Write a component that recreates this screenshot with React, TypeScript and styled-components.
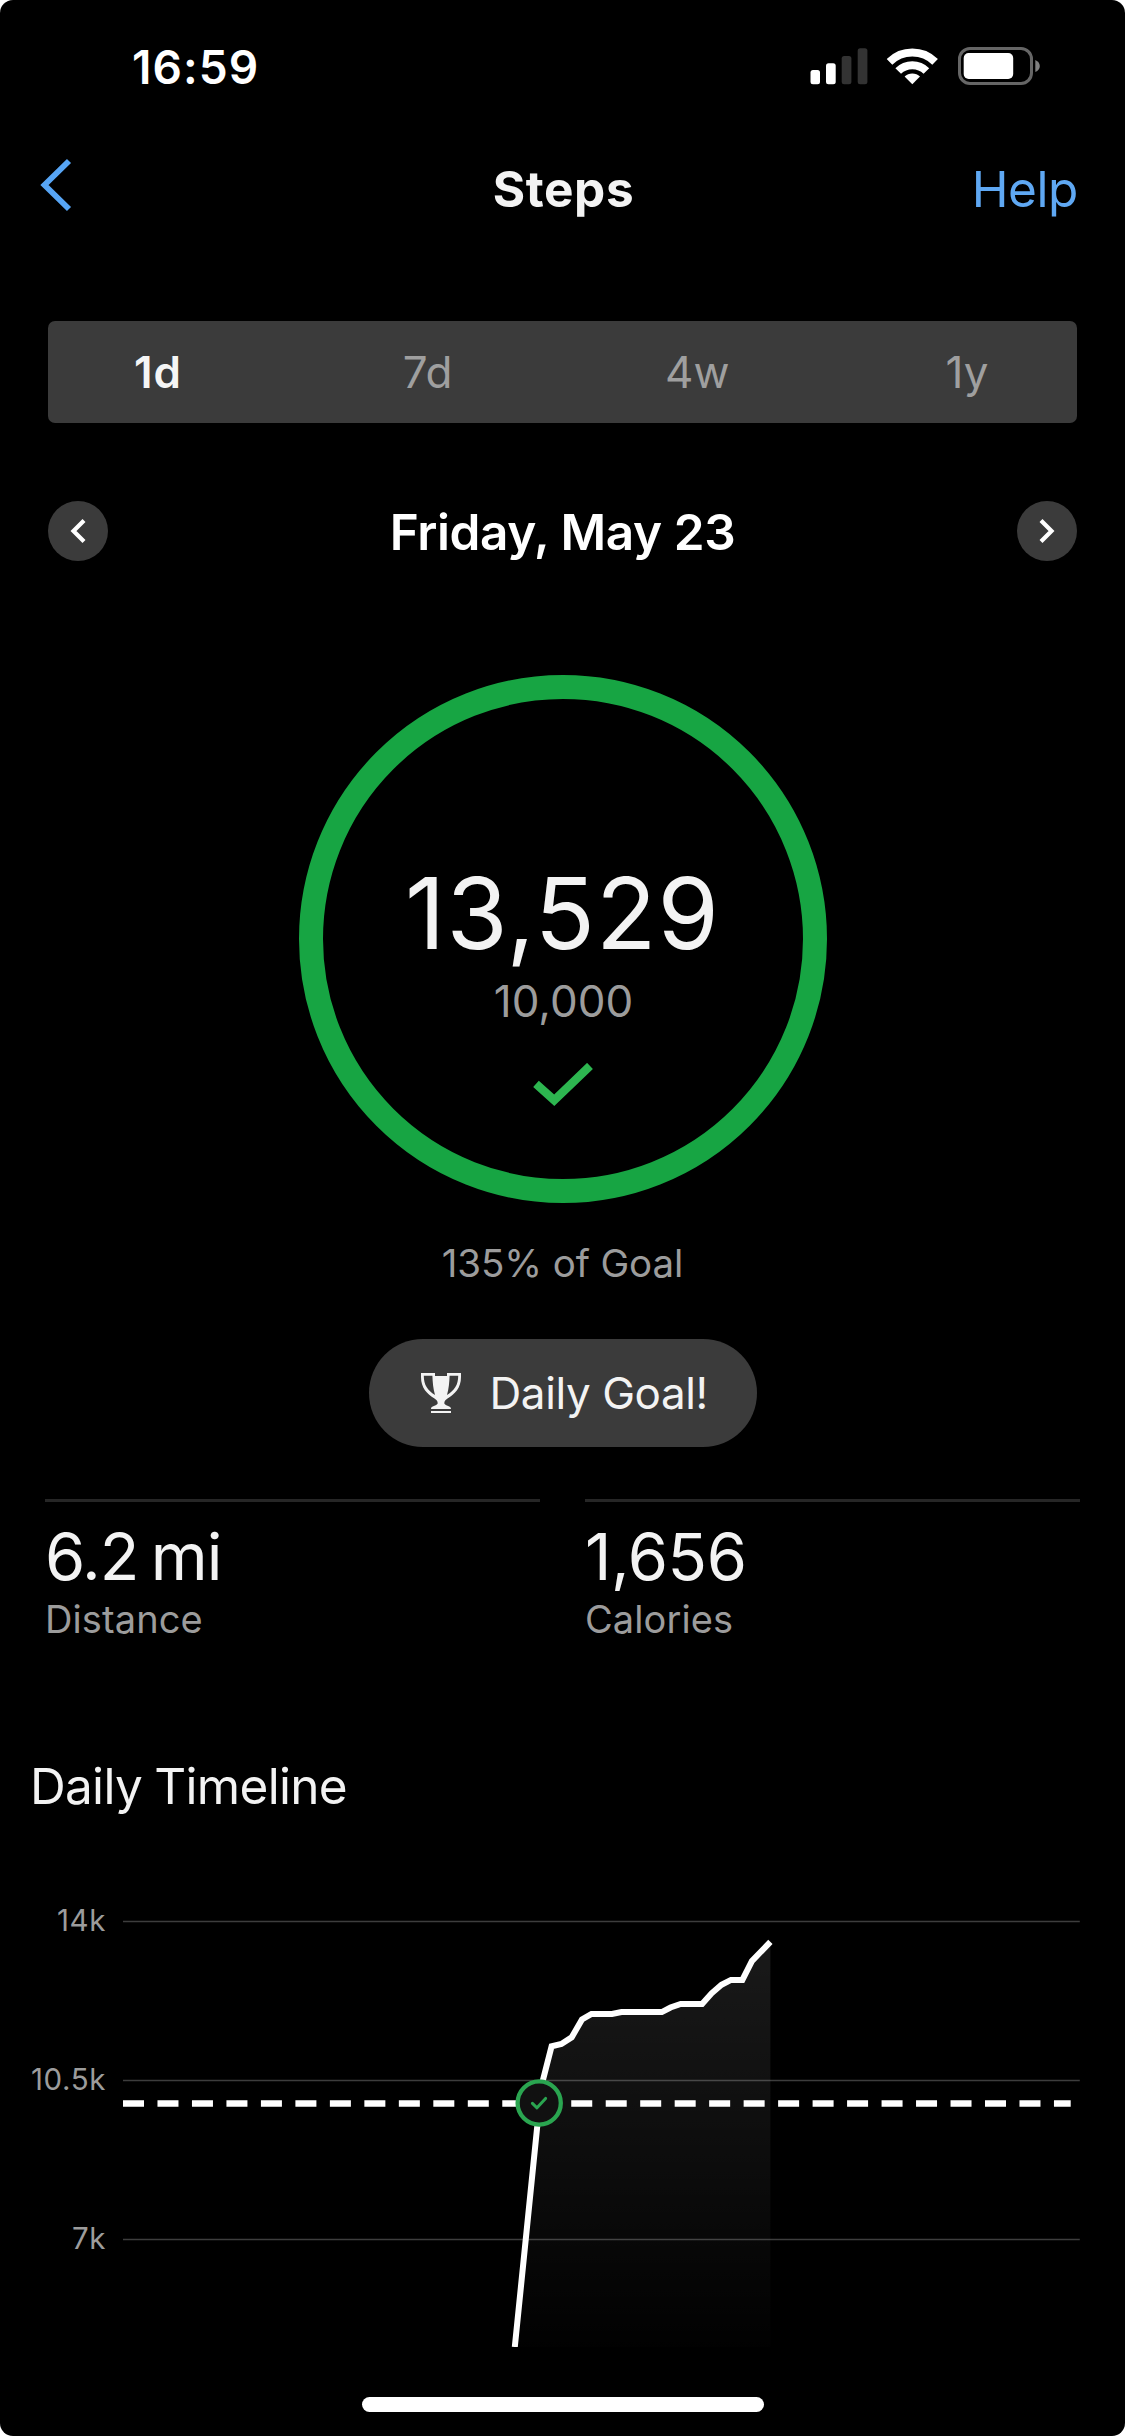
import React from "react";
import styled, { createGlobalStyle } from "styled-components";

const GlobalStyle = createGlobalStyle`
  * { box-sizing: border-box; }
  body { margin: 0; background: #fff; }
`;

const Screen = styled.main`
  width: 1125px;
  height: 2436px;
  border-radius: 13px;
  overflow: hidden;
  background: #000;
  color: #f3f3f3;
  font-family: Inter, "Liberation Sans", sans-serif;
  display: flex;
  flex-direction: column;
  white-space: nowrap;
`;

const StatusBar = styled.header`
  height: 135px;
  flex: none;
  padding: 0 84px 0 132px;
  display: flex;
  justify-content: space-between;
  align-items: center;
`;

const Clock = styled.time`
  margin-top: -1px;
  color: #fff;
  font-size: 46px;
  font-weight: 600;
  line-height: 56px;
  letter-spacing: 1.1px;
`;

const StatusIcons = styled.svg`
  width: 231px;
  height: 40px;
  margin-top: -3px;
`;

const NavBar = styled.nav`
  height: 108px;
  flex: none;
  padding: 0 47px 0 49px;
  display: grid;
  grid-template-columns: 1fr auto 1fr;
  align-items: center;
`;

const BackIcon = styled.svg`
  width: 34px;
  height: 54px;
  margin: -8px 0 0 -10px;
`;

const Title = styled.h1`
  margin: 0;
  font-size: 49.5px;
  font-weight: 700;
  line-height: 60px;
  letter-spacing: 0.6px;
`;

const HelpLink = styled.a`
  justify-self: end;
  color: #5fa8f3;
  font-size: 49.5px;
  line-height: 60px;
  letter-spacing: -0.4px;
`;

const Tabs = styled.div`
  height: 102px;
  flex: none;
  margin: 78px 48px 0;
  border-radius: 7px;
  background: #3b3b3b;
  display: flex;
  justify-content: space-between;
`;

const Tab = styled.button<{ $active?: boolean }>`
  width: 220px;
  padding: 0;
  border: 0;
  background: none;
  font-family: inherit;
  font-size: 44px;
  font-weight: ${(p) => (p.$active ? 600 : 400)};
  letter-spacing: ${(p) => (p.$active ? "1px" : "0")};
  color: ${(p) => (p.$active ? "#f5f5f5" : "#9f9f9f")};
`;

const DateRow = styled.div`
  height: 60px;
  flex: none;
  margin: 78px 48px 0;
  display: flex;
  justify-content: space-between;
  align-items: center;
`;

const RoundButton = styled.button`
  width: 60px;
  height: 60px;
  padding: 0;
  border: 0;
  border-radius: 50%;
  background: #3b3b3b;
  display: flex;
`;

const DateLabel = styled.h2`
  margin: 2px 0 0;
  color: #fff;
  font-size: 49.5px;
  font-weight: 600;
  line-height: 60px;
  letter-spacing: -0.4px;
`;

const Ring = styled.section`
  width: 528px;
  height: 528px;
  flex: none;
  margin: 114px auto 0;
  border: 24px solid #17a543;
  border-radius: 50%;
  padding-top: 154px;
  display: flex;
  flex-direction: column;
  align-items: center;
`;

const StepCount = styled.strong`
  font-size: 99px;
  font-weight: 400;
  line-height: 120px;
  letter-spacing: 1.1px;
`;

const StepGoal = styled.span`
  color: #9c9c9c;
  font-size: 44px;
  line-height: 54px;
  margin-top: 1px;
  padding-left: 2px;
`;

const RingCheck = styled.svg`
  width: 60px;
  height: 44px;
  margin: 35px 0 0 1px;
`;

const GoalPercent = styled.p`
  margin: 36px 0 0;
  text-align: center;
  color: #9c9c9c;
  font-size: 38.5px;
  line-height: 48px;
  letter-spacing: -0.12px;
`;

const Badge = styled.div`
  width: 388px;
  height: 108px;
  flex: none;
  align-self: center;
  margin: 52px 0 0;
  padding-left: 52px;
  border-radius: 54px;
  background: #3b3b3b;
  display: flex;
  align-items: center;
  gap: 29px;
  font-size: 44px;
  letter-spacing: -0.4px;
`;

const TrophyIcon = styled.svg`
  width: 40px;
  height: 40px;
  flex: none;
`;

const Stats = styled.section`
  margin: 52px 45px 0;
  display: grid;
  grid-template-columns: 1fr 1fr;
  gap: 45px;
`;

const Stat = styled.div`
  border-top: 3px solid #262626;
  padding-top: 15px;
`;

const StatValue = styled.div<{ $tight?: boolean }>`
  font-size: 65px;
  line-height: 80px;
  letter-spacing: ${(p) => (p.$tight ? "-1.1px" : "-0.4px")};
  word-spacing: ${(p) => (p.$tight ? "-4.5px" : "0")};
`;

const StatLabel = styled.div`
  margin-top: -1px;
  color: #9c9c9c;
  font-size: 38px;
  line-height: 46px;
  letter-spacing: 0.1px;
`;

const SectionTitle = styled.h2`
  margin: 114px 0 0 30px;
  font-size: 49.5px;
  font-weight: 400;
  line-height: 60px;
  letter-spacing: -0.7px;
  word-spacing: -1px;
`;

const Timeline = styled.section`
  height: 427px;
  flex: none;
  margin-top: 104px;
  display: grid;
  grid-template-columns: 106px 1fr;
  column-gap: 17px;
`;

const Axis = styled.div`
  margin-top: -20px;
  display: flex;
  flex-direction: column;
  text-align: right;
`;

const AxisLabel = styled.span`
  height: 40px;
  margin-bottom: 119px;
  color: #9c9c9c;
  font-size: 29.5px;
  line-height: 41px;
  letter-spacing: 0.6px;
`;

const Plot = styled.svg`
  width: 1002px;
  height: 427px;
  display: block;
`;

const HomeIndicator = styled.div`
  width: 402px;
  height: 15px;
  flex: none;
  margin: auto auto 24px;
  border-radius: 7.5px;
  background: #fff;
`;

/* Plot coordinates: the origin is the left end of the grid, 21.5px above the 14k line. */
const points: [number, number][] = [
  [391.8, 447], [418.3, 186.5], [428.6, 146.2], [438.4, 144], [448.7, 137.3], [459, 119.5],
  [468.5, 113.9], [489, 113.9], [498.5, 112.1], [538.8, 112.1], [547.5, 107.5], [557.7, 104],
  [579.1, 104], [588.6, 93.3], [598.5, 84.8], [608, 79.9], [619.4, 79.9], [628.9, 61.1], [647.4, 41.9],
];
const linePath = "M" + points.map((p) => p.join(" ")).join("L");

const tabs = ["1d", "7d", "4w", "1y"];
const ticks = ["14k", "10.5k", "7k"];

export default function App() {
  return (
    <>
      <GlobalStyle />
      <Screen>
        <StatusBar>
          <Clock>16:59</Clock>
          <StatusIcons viewBox="0 0 231 40">
            <rect x="0.5" y="24" width="9.5" height="14.3" rx="2.5" fill="#fff" />
            <rect x="16" y="17.3" width="9.7" height="21" rx="2.5" fill="#fff" />
            <rect x="31.7" y="10" width="9.7" height="28.3" rx="2.5" fill="#333" />
            <rect x="47.7" y="2.3" width="9.7" height="36" rx="2.5" fill="#333" />
            <g fill="none" stroke="#fff" strokeWidth="8">
              <path d="M79.5 15.8A32.5 32.5 0 0 1 125.1 15.8" />
              <path d="M88.2 25A20 20 0 0 1 116.4 25" />
            </g>
            <path d="M102.3 38.3L94.6 30.6A11 11 0 0 1 110 30.6Z" fill="#fff" />
            <rect x="149.5" y="2.5" width="72" height="35" rx="10.5" fill="none" stroke="#666" strokeWidth="3" />
            <rect x="153.7" y="7" width="49.5" height="26" rx="5" fill="#fff" />
            <path d="M225.3 14Q229.8 16 229.8 20T225.3 26Z" fill="#808080" />
          </StatusIcons>
        </StatusBar>

        <NavBar>
          <BackIcon viewBox="0 0 34 54">
            <path d="M30 3L5.5 27L30 51" fill="none" stroke="#57a5f5" strokeWidth="5.8" />
          </BackIcon>
          <Title>Steps</Title>
          <HelpLink>Help</HelpLink>
        </NavBar>

        <Tabs>
          {tabs.map((t, i) => (
            <Tab key={t} $active={i === 0}>{t}</Tab>
          ))}
        </Tabs>

        <DateRow>
          <RoundButton aria-label="Previous day">
            <svg width="60" height="60" viewBox="0 0 60 60">
              <path d="M36 19.5L25.5 30L36 40.5" fill="none" stroke="#fff" strokeWidth="4.2" />
            </svg>
          </RoundButton>
          <DateLabel>Friday, May 23</DateLabel>
          <RoundButton aria-label="Next day">
            <svg width="60" height="60" viewBox="0 0 60 60">
              <path d="M24 19.5L34.5 30L24 40.5" fill="none" stroke="#fff" strokeWidth="4.2" />
            </svg>
          </RoundButton>
        </DateRow>

        <Ring>
          <StepCount>13,529</StepCount>
          <StepGoal>10,000</StepGoal>
          <RingCheck viewBox="0 0 60 44">
            <path d="M3 20.9L21.2 37.2L57 2.9" fill="none" stroke="#2db650" strokeWidth="8.4" />
          </RingCheck>
        </Ring>

        <GoalPercent>135% of Goal</GoalPercent>

        <Badge>
          <TrophyIcon viewBox="0 0 40 40">
            <path
              fill="#f3f3f3"
              fillRule="evenodd"
              d="M0 0H14V3H26V0H40V4C40 15 34 21 26.5 25.5C24 27 23.3 28.5 23.3 30.5C24.5 33 30 32.5 30 36H10C10 32.5 15.5 33 16.7 30.5C16.7 28.5 16 27 13.5 25.5C6 21 0 15 0 4ZM2.8 2.8C2.8 12 6.5 17.5 14 22C12.2 16 11.6 9 11.4 2.8ZM37.2 2.8H28.6C28.4 9 27.8 16 26 22C33.5 17.5 37.2 12 37.2 2.8Z"
            />
            <path d="M10 38H30V40H10Z" fill="#f3f3f3" />
          </TrophyIcon>
          <span>Daily Goal!</span>
        </Badge>

        <Stats>
          <Stat>
            <StatValue $tight>6.2 mi</StatValue>
            <StatLabel>Distance</StatLabel>
          </Stat>
          <Stat>
            <StatValue>1,656</StatValue>
            <StatLabel>Calories</StatLabel>
          </Stat>
        </Stats>

        <SectionTitle>Daily Timeline</SectionTitle>

        <Timeline>
          <Axis>
            {ticks.map((t) => (
              <AxisLabel key={t}>{t}</AxisLabel>
            ))}
          </Axis>
          <Plot viewBox="0 20 1002 427" preserveAspectRatio="none">
            <defs>
              <linearGradient id="area" x1="0" y1="42" x2="0" y2="447" gradientUnits="userSpaceOnUse">
                <stop offset="0" stopColor="#fff" stopOpacity="0.1" />
                <stop offset="1" stopColor="#fff" stopOpacity="0.006" />
              </linearGradient>
            </defs>
            <path d={linePath + "V447Z"} fill="url(#area)" />
            <path d="M0 21.5H956.8M0 180.5H956.8M0 339.5H956.8" stroke="#fff" strokeOpacity="0.24" strokeWidth="1.6" />
            <path d="M0 203.5H947.7" stroke="#fff" strokeWidth="6.4" strokeDasharray="21 13.48" />
            <path d={linePath} fill="none" stroke="#fff" strokeWidth="6" />
            <circle cx="416.2" cy="203" r="21.6" fill="#111" stroke="#2aa550" strokeWidth="4.3" />
            <path d="M409.4 203.4L414 207.8L422.6 198.4" fill="none" stroke="#2aa550" strokeWidth="3" strokeLinecap="round" strokeLinejoin="round" />
          </Plot>
        </Timeline>

        <HomeIndicator />
      </Screen>
    </>
  );
}
